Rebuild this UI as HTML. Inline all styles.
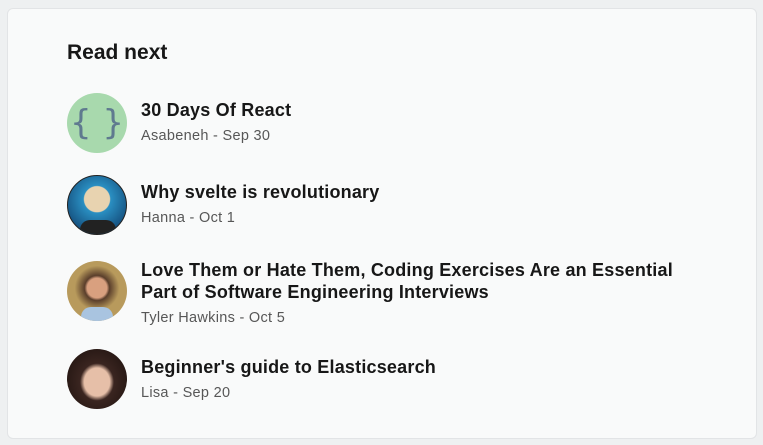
<!DOCTYPE html>
<html><head><style>
html,body{margin:0;padding:0;width:763px;height:445px;background:#eef0f1;overflow:hidden;font-family:"Liberation Sans",Helvetica,Arial,sans-serif;}
.card{position:absolute;left:7px;top:8px;width:748px;height:429px;background:#f9fafa;border:1px solid #e2e4e6;border-radius:6px;}
h2{position:absolute;left:59px;top:32px;margin:0;font-size:21px;font-weight:bold;color:#171717;}
.av{position:absolute;left:59px;width:60px;height:60px;border-radius:50%;overflow:hidden;}
.t{position:absolute;left:133px;font-size:18px;font-weight:bold;color:#171717;line-height:22px;letter-spacing:0.2px;}
.m{position:absolute;left:133px;font-size:14.5px;color:#575757;letter-spacing:0.3px;}
</style></head><body>
<div class="card">
<h2>Read next</h2>
<div class="av" style="top:84px;background:#a8d9ad;">
<svg width="60" height="60"><text x="30" y="41" text-anchor="middle" font-size="34" font-family="DejaVu Sans" fill="#5f7a8f">{ }</text></svg></div>
<div class="t" style="top:90px">30 Days Of React</div>
<div class="m" style="top:119px">Asabeneh - Sep 30</div>

<div class="av" style="top:166px;background:radial-gradient(circle at 50% 40%,#e8d3b0 0 28%,#2a8fc2 30%,#134a78 80%);border:1px solid #222;box-sizing:border-box;">
<div style="position:absolute;left:12px;top:44px;width:36px;height:20px;background:#222;border-radius:10px 10px 0 0"></div></div>
<div class="t" style="top:172px">Why svelte is revolutionary</div>
<div class="m" style="top:201px">Hanna - Oct 1</div>

<div class="av" style="top:252px;background:radial-gradient(circle at 50% 45%,#d9a07f 0 22%,#5a3e2b 28%,#b89a5c 50%);">
<div style="position:absolute;left:14px;top:46px;width:32px;height:16px;background:#a9c4e0;border-radius:10px 10px 0 0"></div></div>
<div class="t" style="top:250px">Love Them or Hate Them, Coding Exercises Are an Essential<br>Part of Software Engineering Interviews</div>
<div class="m" style="top:301px">Tyler Hawkins - Oct 5</div>

<div class="av" style="top:340px;background:radial-gradient(ellipse at 50% 55%,#e6bfa8 0 30%,#3a2520 40%,#2a1a16 70%);"></div>
<div class="t" style="top:347px">Beginner's guide to Elasticsearch</div>
<div class="m" style="top:376px">Lisa - Sep 20</div>
</div>
</body></html>
